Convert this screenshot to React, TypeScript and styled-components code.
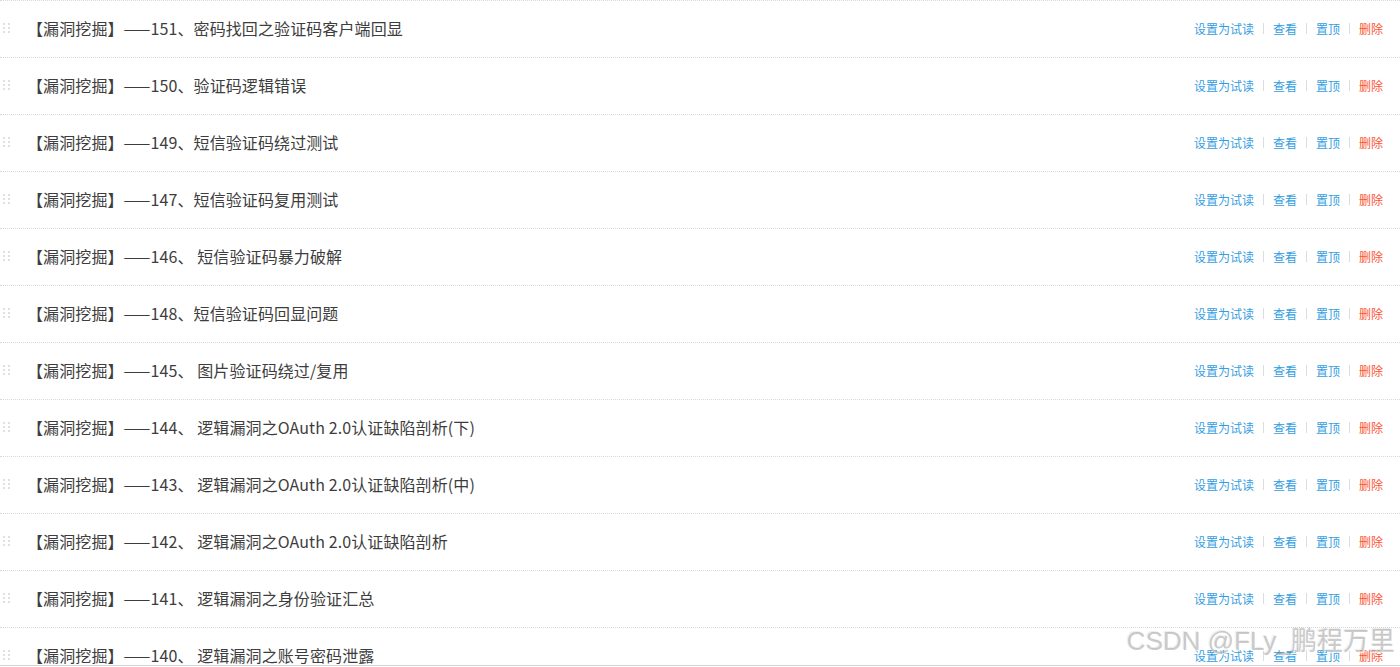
import React from 'react';
import styled, { createGlobalStyle } from 'styled-components';

const GlobalStyle = createGlobalStyle`
  html, body {
    margin: 0;
    padding: 0;
    background: #fff;
  }
  body {
    font-family: "Microsoft YaHei", "Noto Sans CJK SC", "Liberation Sans", sans-serif;
  }
`;

const Page = styled.div`
  position: relative;
  height: 665px;
  overflow: hidden;
  border-bottom: 1px solid #d4d4d4;
`;

const List = styled.ul`
  list-style: none;
  margin: 0;
  padding: 0;
`;

const Row = styled.li`
  display: flex;
  align-items: center;
  height: 54px;
  padding: 0 17px 2px 3px;
  border-top: 1px dotted #d9d9d9;
`;

const Handle = styled.span`
  display: grid;
  grid-template-columns: repeat(2, 2px);
  grid-auto-rows: 2px;
  gap: 2px 3px;
  width: 24px;
  flex-shrink: 0;
  i {
    background: #e0e0e0;
  }
`;

const Title = styled.span`
  flex: 1;
  font-size: 16px;
  color: #3d3d3d;
  white-space: nowrap;
  letter-spacing: 0.1px;
`;

const Actions = styled.div`
  display: flex;
  align-items: center;
  font-size: 12px;
`;

const Action = styled.a<{ $danger?: boolean }>`
  color: ${p => (p.$danger ? '#fc5531' : '#349edf')};
  text-decoration: none;
  cursor: pointer;
`;

const Sep = styled.span`
  width: 1px;
  height: 11px;
  background: #dddddd;
  margin: 0 9px;
`;

const Watermark = styled.div`
  position: absolute;
  right: 5px;
  bottom: 8px;
  font-family: "Liberation Sans", "Noto Sans CJK SC", sans-serif;
  font-size: 26px;
  color: rgba(160, 160, 160, 0.55);
  text-shadow: 1px 1px 1px rgba(255, 255, 255, 0.9), -1px -1px 1px rgba(120, 120, 120, 0.15);
  white-space: nowrap;
  pointer-events: none;
`;

const titles = [
  '【漏洞挖掘】——151、密码找回之验证码客户端回显',
  '【漏洞挖掘】——150、验证码逻辑错误',
  '【漏洞挖掘】——149、短信验证码绕过测试',
  '【漏洞挖掘】——147、短信验证码复用测试',
  '【漏洞挖掘】——146、 短信验证码暴力破解',
  '【漏洞挖掘】——148、短信验证码回显问题',
  '【漏洞挖掘】——145、 图片验证码绕过/复用',
  '【漏洞挖掘】——144、 逻辑漏洞之OAuth 2.0认证缺陷剖析(下)',
  '【漏洞挖掘】——143、 逻辑漏洞之OAuth 2.0认证缺陷剖析(中)',
  '【漏洞挖掘】——142、 逻辑漏洞之OAuth 2.0认证缺陷剖析',
  '【漏洞挖掘】——141、 逻辑漏洞之身份验证汇总',
  '【漏洞挖掘】——140、 逻辑漏洞之账号密码泄露',
];

const ArticleRow = ({ title }: { title: string }) => (
  <Row>
    <Handle>
      {Array.from({ length: 6 }).map((_, i) => <i key={i} />)}
    </Handle>
    <Title>{title}</Title>
    <Actions>
      <Action>设置为试读</Action>
      <Sep />
      <Action>查看</Action>
      <Sep />
      <Action>置顶</Action>
      <Sep />
      <Action $danger>删除</Action>
    </Actions>
  </Row>
);

export default function App() {
  return (
    <Page>
      <GlobalStyle />
      <List>
        {titles.map((t, i) => <ArticleRow key={`article_${i}`} title={t} />)}
      </List>
      <Watermark>CSDN @FLy_鹏程万里</Watermark>
    </Page>
  );
}
